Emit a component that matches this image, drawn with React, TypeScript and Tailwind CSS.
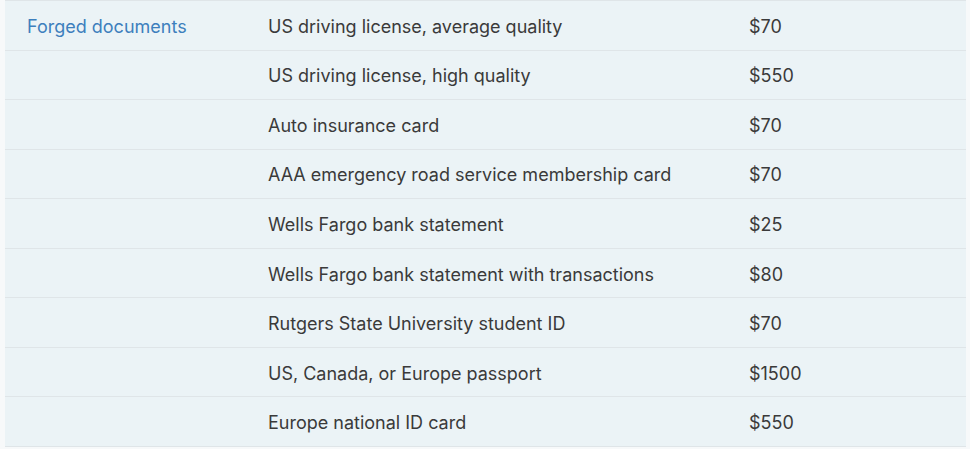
const rows: [string, string][] = [
  ["US driving license, average quality", "$70"],
  ["US driving license, high quality", "$550"],
  ["Auto insurance card", "$70"],
  ["AAA emergency road service membership card", "$70"],
  ["Wells Fargo bank statement", "$25"],
  ["Wells Fargo bank statement with transactions", "$80"],
  ["Rutgers State University student ID", "$70"],
  ["US, Canada, or Europe passport", "$1500"],
  ["Europe national ID card", "$550"],
]

export default function App() {
  return (
    <div className="h-[449px] w-[970px] bg-[#f7f9fa] pl-[5px] pr-[4px] font-['Inter',sans-serif] text-[18px] text-[#3a3a3a]">
      <div className="border-t border-[#dfe5e8] bg-[#ebf3f6]">
        {rows.map(([item, price], i) => (
          <div
            key={item}
            className="grid h-[49.56px] grid-cols-[241px_481px_1fr] items-center border-b border-[#dfe5e8] pt-[2px]"
          >
            <div className="pl-[22px] text-[#3d7fbd]">{i === 0 ? "Forged documents" : ""}</div>
            <div className="pl-[22px]">{item}</div>
            <div className="pl-[22px]">{price}</div>
          </div>
        ))}
      </div>
    </div>
  )
}
